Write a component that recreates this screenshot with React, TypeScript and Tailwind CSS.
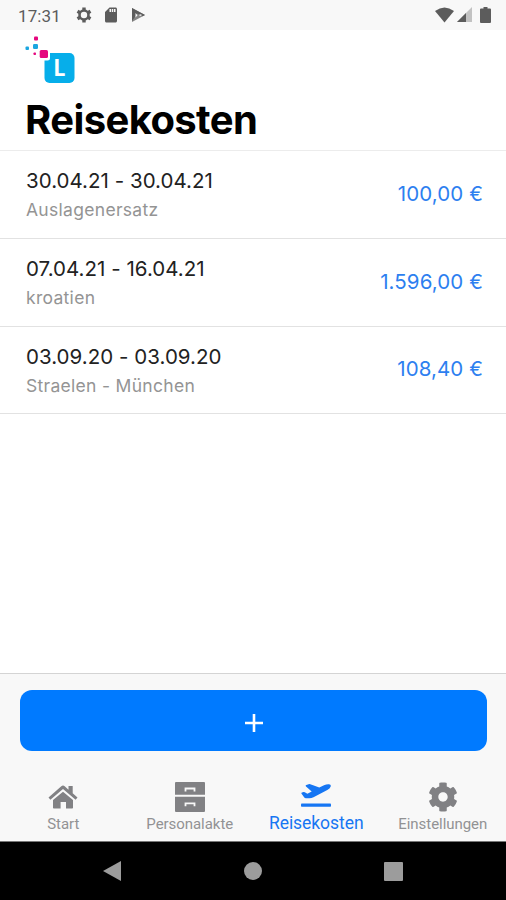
import React from "react";
import { FaCog } from "react-icons/fa";
import { MdSdCard } from "react-icons/md";

const expenses = [
  { date: "30.04.21 - 30.04.21", title: "Auslagenersatz", amount: "100,00 €" },
  { date: "07.04.21 - 16.04.21", title: "kroatien", amount: "1.596,00 €" },
  { date: "03.09.20 - 03.09.20", title: "Straelen - München", amount: "108,40 €" },
];

const StatusBar: React.FC = () => (
  <div className="flex h-[30px] shrink-0 items-center justify-between bg-[#f8f8f8] pl-[18px] pr-[15px] text-[#5c5c5c]">
    <div className="flex items-center">
      <span className="w-[57px] pt-px font-['Roboto',sans-serif] text-[17px] leading-5 tracking-[0.1px]">17:31</span>
      <svg className="h-[18px] w-[18px]" viewBox="0 0 18 18" fill="none" stroke="currentColor">
        <circle cx="9" cy="9" r="4.500" strokeWidth="2.600" />
        <path d="M9 1.500v2.500M9 14v2.500M2.500 5.250l2.200 1.250M13.300 11.500l2.200 1.250M2.500 12.750l2.200-1.250M13.300 6.500l2.200-1.250" strokeWidth="3.400" />
      </svg>
      <MdSdCard className="ml-[9px] h-[18px] w-[18px]" />
      <svg className="ml-[11px] h-4 w-[15px]" viewBox="0 0 15 16" fill="currentColor">
        <path d="M1 1 14 8 1 15Z" fill="#858585" />
        <path d="M1 1 14 8 11.500 9.300 6 6.500 5 8.500 1 14Z" />
        <path d="M4.500 6v4.500l2-2.200ZM9 7.200l2.300.8-2.300 1-.9-.9Z" fill="#f8f8f8" />
      </svg>
    </div>
    <div className="flex items-center">
      <svg className="h-4 w-[19px]" viewBox="0 0 19 16" fill="currentColor">
        <path d="M0 4Q9.5-3 19 4L9.5 15.500Z" />
      </svg>
      <svg className="ml-[3px] h-4 w-[15px]" viewBox="0 0 15 16">
        <path d="M15 0v15H0Z" fill="#c2c2c2" />
        <path d="M9 6v9H0Z" fill="#5c5c5c" />
      </svg>
      <svg className="ml-2 h-4 w-[11px]" viewBox="0 0 11 16" fill="currentColor">
        <path d="M3.500 0h4v1.600H10q1 0 1 1V15q0 1-1 1H1q-1 0-1-1V2.600q0-1 1-1h2.500Z" />
      </svg>
    </div>
  </div>
);

const Logo: React.FC = () => (
  <svg className="h-12 w-[51px]" viewBox="0 0 51 48">
    <rect x="19.500" y="17" width="30" height="30" rx="5" fill="#06aeea" />
    <rect x="12.500" y="12.500" width="12.500" height="12" rx="2.500" fill="#fff" />
    <rect x="14.700" y="14" width="8.300" height="8" rx="1.500" fill="#e5077e" />
    <rect x="9" y="0.500" width="4" height="4" rx="1" fill="#e5077e" />
    <rect x="8" y="8" width="5" height="5" rx="1.200" fill="#1ba6e0" />
    <rect x="0.500" y="10.500" width="3.500" height="3.500" rx="1" fill="#1ba6e0" />
    <rect x="8.500" y="16.500" width="2.500" height="2.500" rx="0.800" fill="#e5077e" />
    <text x="28.500" y="40" fill="#fff" fontFamily="Lato, sans-serif" fontWeight="900" fontSize="22">
      L
    </text>
  </svg>
);

const HomeIcon: React.FC = () => (
  <svg className="h-[30px] w-[30px]" viewBox="0 0 30 30" fill="currentColor">
    <path d="M15 9.700 25 18V25.700q0 .8-.8.8h-6.200V20h-5.400v6.500H5.800Q5 26.500 5 25.700V18Z" />
    <path d="M.5 15.500 13.300 4.200q1.700-1.400 3.400 0L20.500 7.700V4h4.200V11.300l4.800 4.200-1.900 2.200L15 7 2.400 17.700Z" />
  </svg>
);

const CabinetIcon: React.FC = () => (
  <svg className="h-[30px] w-[30px]" viewBox="0 0 30 30">
    <path d="M1 0h28q1 0 1 1v11.800H0V1q0-1 1-1ZM0 14.800h30V29q0 1-1 1H1q-1 0-1-1Z" fill="currentColor" />
    <path d="M10.500 9.500V6.500h9v3M10.500 24.300v-3h9v3" fill="none" stroke="#f8f8f8" strokeWidth="1.800" />
  </svg>
);

const PlaneIcon: React.FC = () => (
  <svg className="h-[30px] w-[30px]" viewBox="0 0 30 30" fill="currentColor">
    <path d="M.4 11.600Q.2 10.900 1 10.600l1.500-.5q.7-.2 1.300.2l2.600 1.500 4.300-2.200L5 4.400q-.8-.8.3-1.300l2.300-.9q.9-.3 1.700.1l9 3.300 4.700-2.300Q25.500 2.100 28 2.300q2.300.3 1.700 2.200-.7 2.100-3.400 3.500L12.500 15.200Q10.500 16.100 8.300 16.200l-3.400.1q-1 0-1.600-.8Z" />
    <rect x="0" y="21.500" width="30" height="3.200" rx="0.800" />
  </svg>
);

const tabs = [
  { label: "Start", icon: <HomeIcon /> },
  { label: "Personalakte", icon: <CabinetIcon /> },
  { label: "Reisekosten", icon: <PlaneIcon />, active: true },
  { label: "Einstellungen", icon: <FaCog className="h-[30px] w-[30px]" /> },
];

export default function App() {
  return (
    <div className="flex h-[900px] w-[506px] flex-col overflow-hidden bg-white font-['Inter',sans-serif]">
      <StatusBar />

      <header className="flex h-[121px] shrink-0 flex-col border-b border-[#ececec] pl-[25px] pt-1.5">
        <Logo />
        <h1 className="mt-3 text-[40px] leading-[48px] font-bold tracking-[-0.600px] text-black">Reisekosten</h1>
      </header>

      <ul className="min-h-0 flex-1">
        {expenses.map((item) => (
          <li
            key={item.date}
            className="flex h-[87.800px] items-center justify-between border-b border-[#e2e2e2] pl-[26px] pr-[23px]"
          >
            <div className="pt-[3px]">
              <p className="text-[20.500px] leading-7 tracking-[0.03px] text-[#222]">{item.date}</p>
              <p className="text-[17.500px] leading-[29px] tracking-[0.300px] text-[#949494]">{item.title}</p>
            </div>
            <span className="pb-px text-[20.500px] leading-7 tracking-[0.1px] text-[#2d7ff0]">{item.amount}</span>
          </li>
        ))}
      </ul>

      <footer className="shrink-0 border-t border-[#d4d4d4] bg-[#f8f8f8]">
        <div className="pl-5 pr-[19px] pt-4">
          <button className="flex h-[61px] w-full items-center justify-center rounded-xl bg-[#007aff] pt-1">
            <svg className="h-[18px] w-[18px]" viewBox="0 0 18 18" stroke="#fff" strokeWidth="2.600">
              <path d="M9 0v18M0 9h18" />
            </svg>
          </button>
        </div>
        <nav className="grid h-[90px] grid-cols-4 pt-[31px]">
          {tabs.map((tab) => (
            <div
              key={tab.label}
              className={`flex flex-col items-center font-['Roboto',sans-serif] ${
                tab.active ? "text-[#1676f3]" : "text-[#818184]"
              }`}
            >
              {tab.icon}
              <span
                className={
                  tab.active
                    ? "-mt-px text-[17.500px] leading-6 tracking-[-0.050px]"
                    : "text-[15px] leading-6 tracking-[-0.050px] text-[#929294]"
                }
              >
                {tab.label}
              </span>
            </div>
          ))}
        </nav>
      </footer>

      {/* Android navigation */}
      <div className="flex h-[59px] shrink-0 items-center justify-between border-t border-[#777] bg-black pl-[102px] pr-[103px] text-[#9c9c9c]">
        <svg className="h-5 w-5" viewBox="0 0 20 20" fill="currentColor">
          <path d="M1 10 19 0v20Z" />
        </svg>
        <div className="h-[18px] w-[18px] rounded-full bg-[#9c9c9c]" />
        <div className="h-[19px] w-[19px] rounded-[1px] bg-[#9c9c9c]" />
      </div>
    </div>
  );
}
